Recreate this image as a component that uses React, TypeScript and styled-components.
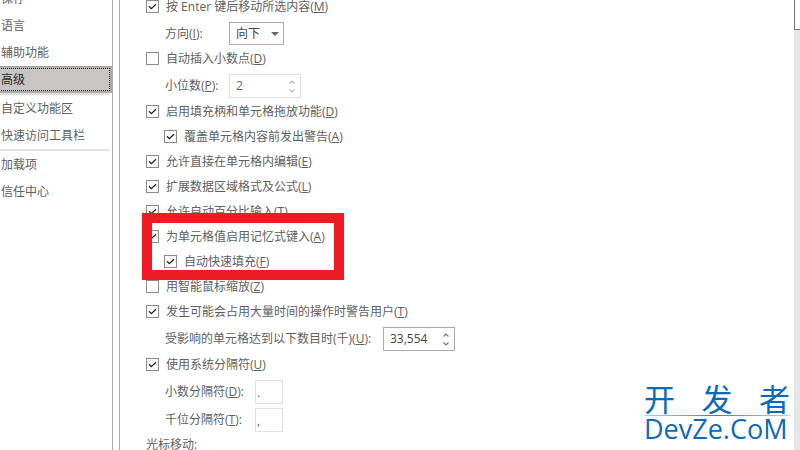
import React, { useId } from "react";
import styled, { createGlobalStyle } from "styled-components";

const GlobalStyle = createGlobalStyle`
  * { box-sizing: border-box; }
  body {
    margin: 0;
    background: #fff;
    color: #606060;
    font-family: "Open Sans", "Noto Sans CJK SC", sans-serif;
    font-size: 12px;
    line-height: 16px;
    overflow: hidden;
  }
  button, input, select { font: inherit; color: inherit; }
`;

const Page = styled.div`
  display: flex;
  height: 100vh;
  overflow: hidden;
  position: relative;
`;

const Sidebar = styled.nav`
  flex: none;
  width: 113px;
  border-right: 1px solid #ababab;
  overflow: hidden;
`;

const CategoryList = styled.div`
  display: flex;
  flex-direction: column;
  margin-top: -15px;
`;

const Category = styled.button<{ $active?: boolean }>`
  height: 27px;
  margin-left: -3px;
  padding: 0 4px;
  border: 0;
  background: ${(p) => (p.$active ? "#c8c6c4" : "transparent")};
  box-shadow: ${(p) => (p.$active ? "inset 0 0 0 2px #ababab" : "none")};
  outline: ${(p) => (p.$active ? "1px dotted #222" : "none")};
  outline-offset: -3px;
  color: ${(p) => (p.$active ? "#262626" : "#606060")};
  text-align: left;
  white-space: nowrap;
`;

const Divider = styled.hr`
  width: 109px;
  height: 2px;
  margin: 0;
  border: 0;
  background: #e3e3e3;
`;

const Panel = styled.main`
  flex: 1;
  min-width: 0;
  margin-left: 6px;
  border-left: 1px solid #ababab;
  overflow: hidden;
`;

const Options = styled.form`
  display: flex;
  flex-direction: column;
  margin-top: -6px;
  padding-left: 26px;
`;

const CheckLabel = styled.label<{ $nested?: boolean }>`
  display: flex;
  align-items: center;
  gap: 7px;
  height: 25px;
  padding-left: ${(p) => (p.$nested ? 18 : 0)}px;
  white-space: nowrap;
`;

const CheckMark = styled.span`
  display: grid;
  width: 13px;
  height: 13px;
  & > * { grid-area: 1 / 1; }
  svg { pointer-events: none; }
`;

const CheckInput = styled.input`
  appearance: none;
  width: 13px;
  height: 13px;
  margin: 0;
  border: 1px solid #8a8a8a;
  background: #fff;
  & + svg { visibility: hidden; }
  &:checked + svg { visibility: visible; }
`;

const FieldRow = styled.div`
  display: flex;
  align-items: center;
  padding: 3px 0 1px 19px;
  white-space: nowrap;
`;

const FieldLabel = styled.label<{ $width: number }>`
  width: ${(p) => p.$width}px;
`;

const SelectBox = styled.span`
  display: grid;
  align-items: center;
  width: 55px;
  height: 23px;
  & > * { grid-area: 1 / 1; }
  svg { justify-self: end; margin-right: 5px; pointer-events: none; }
`;

const Select = styled.select`
  appearance: none;
  width: 100%;
  height: 100%;
  padding: 0 6px;
  border: 1px solid #ababab;
  border-radius: 0;
  background: #fdfdfd;
  color: #444;
`;

const SpinBox = styled.span<{ $disabled?: boolean }>`
  display: flex;
  width: 72px;
  height: 24px;
  border: 1px solid ${(p) => (p.$disabled ? "#e1e1e1" : "#ababab")};
  color: ${(p) => (p.$disabled ? "#666" : "#444")};
`;

const SpinInput = styled.input`
  flex: 1;
  min-width: 0;
  padding: 0 0 0 6px;
  border: 0;
  background: transparent;
`;

const SpinButtons = styled.span<{ $disabled?: boolean }>`
  display: flex;
  flex-direction: column;
  justify-content: center;
  width: 16px;
  color: ${(p) => (p.$disabled ? "#b5b5b5" : "#777")};
`;

const SpinButton = styled.button`
  display: flex;
  align-items: center;
  justify-content: center;
  height: 9px;
  padding: 0;
  border: 0;
  background: transparent;
`;

const CharInput = styled.input`
  width: 28px;
  height: 24px;
  padding: 0 1px;
  border: 1px solid #e1e1e1;
  background: #fff;
`;

const Subheading = styled.div`
  height: 25px;
  line-height: 24px;
`;

const Highlighted = styled.div`
  position: relative;
`;

const HighlightFrame = styled.div`
  position: absolute;
  top: -11px;
  bottom: -6px;
  left: -4px;
  width: 202px;
  border: 10px solid #ed1c24;
  pointer-events: none;
`;

const ScrollTrack = styled.div`
  flex: none;
  width: 6px;
  background: #e5e5e5;
`;

const ScrollThumb = styled.div`
  height: 30px;
  border: solid #777;
  border-width: 0 0 1px 1px;
  background: #fff;
`;

const Watermark = styled.div`
  position: absolute;
  right: 10px;
  bottom: 8px;
  width: 146px;
  color: #0c6ab8;
`;

const WatermarkTop = styled.div`
  display: flex;
  justify-content: space-between;
  font-family: "Noto Sans CJK SC", sans-serif;
  font-size: 31px;
  line-height: 34px;
`;

const WatermarkLine = styled.div`
  height: 1px;
  background: linear-gradient(90deg, #9fdcf3, #2a87c8 50%, #9fdcf3);
`;

const WatermarkBottom = styled.div`
  font-size: 27px;
  line-height: 26px;
  white-space: nowrap;
`;

function Key({ text, k }: { text: string; k: string }) {
  return (
    <span>
      {text}(<u>{k}</u>)
    </span>
  );
}

function Check(props: { text: string; k: string; on?: boolean; nested?: boolean }) {
  return (
    <CheckLabel $nested={props.nested}>
      <CheckMark>
        <CheckInput type="checkbox" defaultChecked={props.on} />
        <svg width="13" height="13" viewBox="0 0 13 13" fill="none" stroke="#222" strokeWidth="1.3">
          <path d="M3 6.3 5.3 8.6 10 4.2" />
        </svg>
      </CheckMark>
      <Key text={props.text} k={props.k} />
    </CheckLabel>
  );
}

function Spinner(props: { text: string; k: string; width: number; value: string; disabled?: boolean }) {
  const id = useId();
  return (
    <FieldRow>
      <FieldLabel htmlFor={id} $width={props.width}>
        <Key text={props.text} k={props.k} />:
      </FieldLabel>
      <SpinBox $disabled={props.disabled}>
        <SpinInput id={id} defaultValue={props.value} disabled={props.disabled} />
        <SpinButtons $disabled={props.disabled}>
          <SpinButton type="button" aria-label="增加" disabled={props.disabled}>
            <svg width="6" height="4" viewBox="0 0 6 4" fill="none" stroke="currentColor" strokeWidth="1.2">
              <path d="M.5 3.5 3 1 5.5 3.5" />
            </svg>
          </SpinButton>
          <SpinButton type="button" aria-label="减少" disabled={props.disabled}>
            <svg width="6" height="4" viewBox="0 0 6 4" fill="none" stroke="currentColor" strokeWidth="1.2">
              <path d="M.5 .5 3 3 5.5 .5" />
            </svg>
          </SpinButton>
        </SpinButtons>
      </SpinBox>
    </FieldRow>
  );
}

function Separator(props: { text: string; k: string; value: string }) {
  const id = useId();
  return (
    <FieldRow>
      <FieldLabel htmlFor={id} $width={90}>
        <Key text={props.text} k={props.k} />:
      </FieldLabel>
      <CharInput id={id} defaultValue={props.value} disabled />
    </FieldRow>
  );
}

export default function App() {
  return (
    <Page>
      <GlobalStyle />
      <Sidebar>
        <CategoryList>
          <Category>保存</Category>
          <Category>语言</Category>
          <Category>辅助功能</Category>
          <Category $active>高级</Category>
          <Divider />
          <Category>自定义功能区</Category>
          <Category>快速访问工具栏</Category>
          <Divider />
          <Category>加载项</Category>
          <Category>信任中心</Category>
        </CategoryList>
      </Sidebar>
      <Panel>
        <Options>
          <Check text="按 Enter 键后移动所选内容" k="M" on />
          <FieldRow>
            <FieldLabel htmlFor="direction" $width={64}>
              <Key text="方向" k="I" />:
            </FieldLabel>
            <SelectBox>
              <Select id="direction">
                <option>向下</option>
              </Select>
              <svg width="8" height="4" viewBox="0 0 8 4" fill="#666">
                <path d="M0 0h8L4 4z" />
              </svg>
            </SelectBox>
          </FieldRow>
          <Check text="自动插入小数点" k="D" />
          <Spinner text="小位数" k="P" width={64} value="2" disabled />
          <Check text="启用填充柄和单元格拖放功能" k="D" on />
          <Check text="覆盖单元格内容前发出警告" k="A" on nested />
          <Check text="允许直接在单元格内编辑" k="E" on />
          <Check text="扩展数据区域格式及公式" k="L" on />
          <Check text="允许自动百分比输入" k="T" on />
          <Highlighted>
            <Check text="为单元格值启用记忆式键入" k="A" on />
            <Check text="自动快速填充" k="F" on nested />
            <HighlightFrame />
          </Highlighted>
          <Check text="用智能鼠标缩放" k="Z" />
          <Check text="发生可能会占用大量时间的操作时警告用户" k="T" on />
          <Spinner text="受影响的单元格达到以下数目时(千)" k="U" width={218} value="33,554" />
          <Check text="使用系统分隔符" k="U" on />
          <Separator text="小数分隔符" k="D" value="." />
          <Separator text="千位分隔符" k="T" value="," />
          <Subheading>光标移动:</Subheading>
        </Options>
      </Panel>
      <ScrollTrack>
        <ScrollThumb />
      </ScrollTrack>
      <Watermark>
        <WatermarkTop>
          <span>开</span>
          <span>发</span>
          <span>者</span>
        </WatermarkTop>
        <WatermarkLine />
        <WatermarkBottom>DevZe.CoM</WatermarkBottom>
      </Watermark>
    </Page>
  );
}
